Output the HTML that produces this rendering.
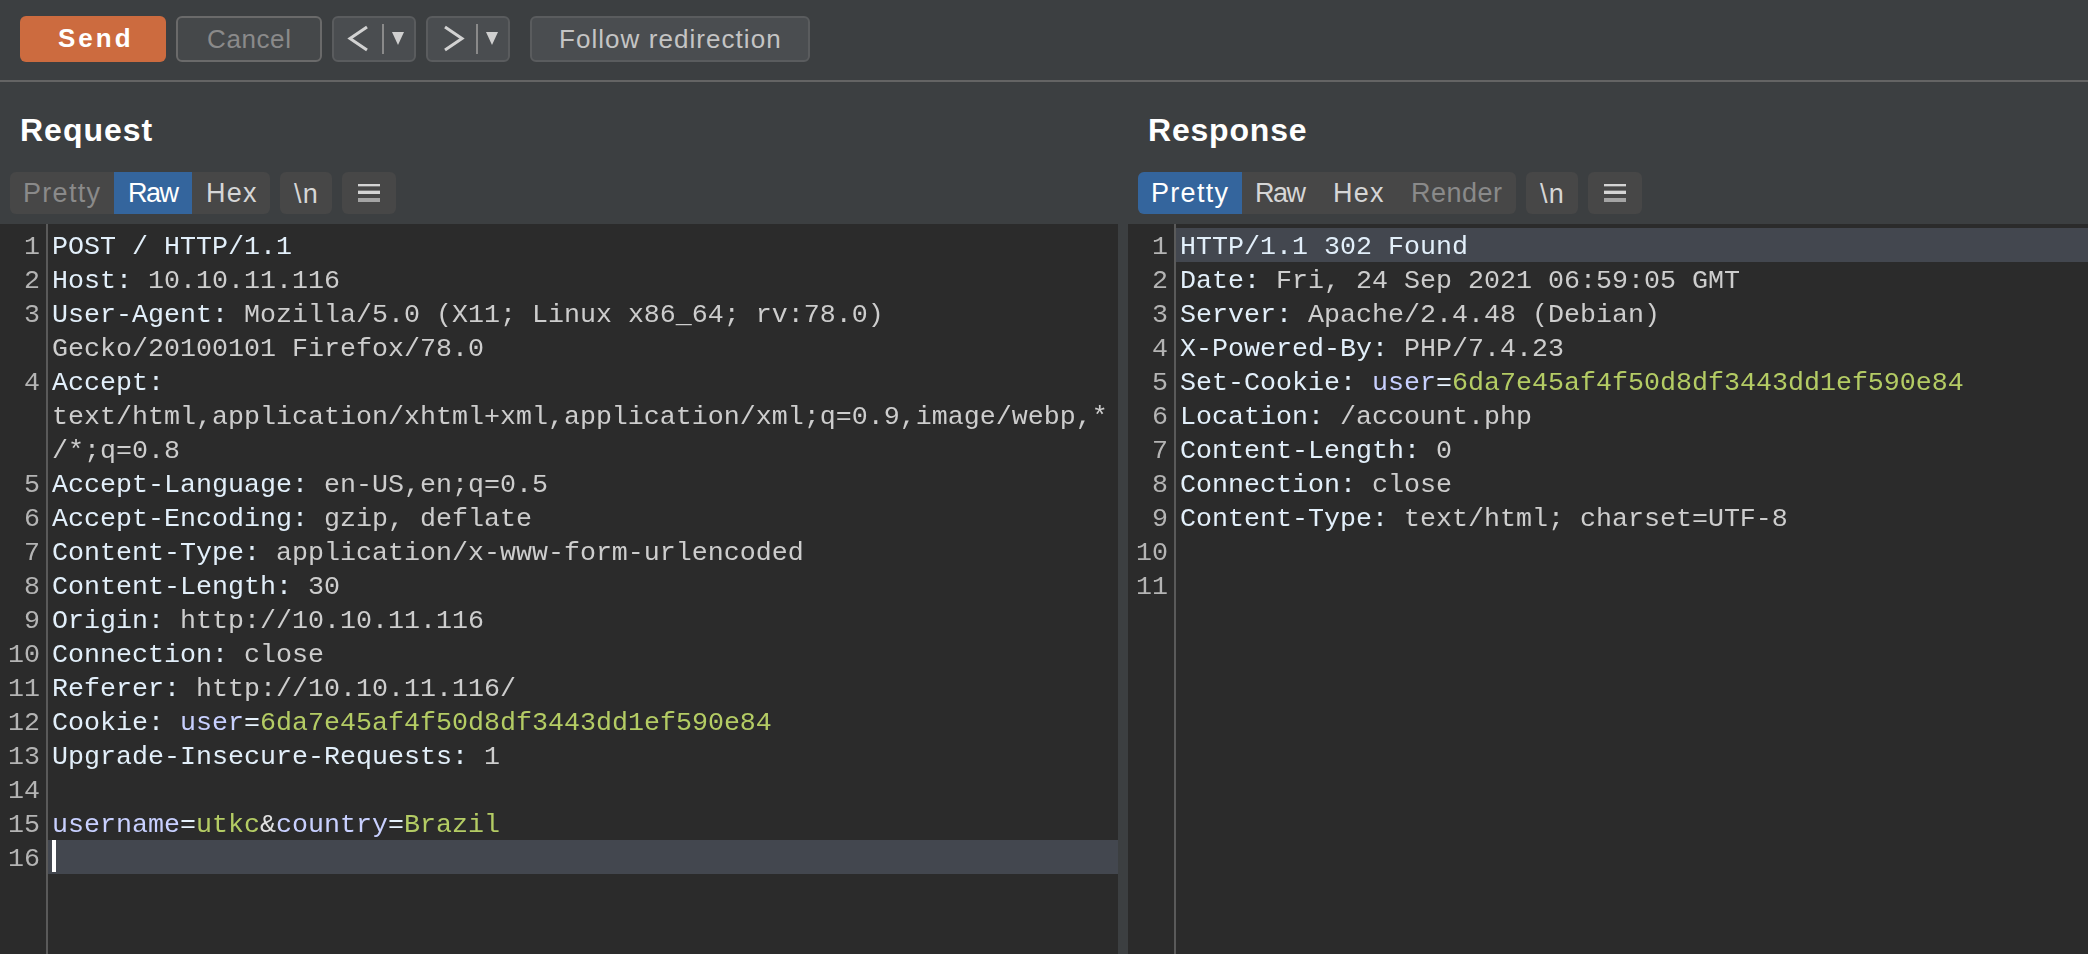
<!DOCTYPE html>
<html><head><meta charset="utf-8">
<style>
html,body{margin:0;padding:0;}
body{width:2088px;height:954px;overflow:hidden;background:#3c3f41;position:relative;font-family:"Liberation Sans",sans-serif;}
.abs{position:absolute;}
.btn{position:absolute;box-sizing:border-box;border-radius:6px;}
#send{left:20px;top:16px;width:146px;height:46px;background:#cc6b3f;}
#cancel{left:176px;top:16px;width:146px;height:46px;background:#45484a;border:2px solid #6a6a6a;}
#prev{left:332px;top:16px;width:84px;height:46px;background:#4a4d50;border:2px solid #5a5c5e;}
#next{left:426px;top:16px;width:84px;height:46px;background:#4a4d50;border:2px solid #5a5c5e;}
#follow{left:530px;top:16px;width:280px;height:46px;background:#4a4d50;border:2px solid #5a5c5e;}
.lbl{position:absolute;white-space:pre;line-height:1;}
#sep{left:0;top:80px;width:2088px;height:2px;background:#646464;}
.title{position:absolute;font-weight:bold;font-size:32px;color:#ffffff;letter-spacing:0.8px;line-height:1;white-space:pre;}
.tabgrp{position:absolute;top:172px;height:42px;background:#474747;border-radius:6px;overflow:hidden;}
.tab{position:absolute;top:0;height:42px;}
.tab.sel{background:#34659d;}
.tabt{position:absolute;font-size:27px;line-height:1;white-space:pre;letter-spacing:1.3px;}
.editor{position:absolute;top:224px;height:730px;background:#2b2b2b;overflow:hidden;}
.gut{position:absolute;top:0;width:2px;height:730px;background:#5a5a5a;}
.hl{position:absolute;height:34px;background:#43474f;}
.code{position:absolute;will-change:transform;font-family:"Liberation Mono",monospace;font-size:26.667px;line-height:34px;white-space:pre;color:#cdcdcd;}
.ln{position:absolute;will-change:transform;font-family:"Liberation Mono",monospace;font-size:26.667px;line-height:34px;white-space:pre;color:#b4b4b4;text-align:right;}
.h{color:#e2effa;}
.k{color:#c8d0ff;}
.v{color:#b4cc64;}
.e{color:#e6f2fc;}
.a{color:#e0e0e0;}
</style></head>
<body>
<!-- toolbar -->
<div class="btn" id="send"><div class="lbl" style="left:38px;top:9px;font-size:26px;font-weight:bold;color:#fff;letter-spacing:3px;">Send</div></div>
<div class="btn" id="cancel"><div class="lbl" style="left:29px;top:8px;font-size:26px;color:#8a8a8a;letter-spacing:0.6px;">Cancel</div></div>
<div class="btn" id="prev">
<svg class="abs" style="left:-2px;top:-2px" width="84" height="46" viewBox="0 0 84 46">
<polyline points="35,11 18,22.5 35,34" fill="none" stroke="#d2d2d2" stroke-width="3"/>
<rect x="50" y="8" width="2" height="30" fill="#8a8a8a"/>
<polygon points="60,16 72,16 66,29" fill="#cfcfcf"/>
</svg></div>
<div class="btn" id="next">
<svg class="abs" style="left:-2px;top:-2px" width="84" height="46" viewBox="0 0 84 46">
<polyline points="19,11 36,22.5 19,34" fill="none" stroke="#d2d2d2" stroke-width="3"/>
<rect x="50" y="8" width="2" height="30" fill="#8a8a8a"/>
<polygon points="60,16 72,16 66,29" fill="#cfcfcf"/>
</svg></div>
<div class="btn" id="follow"><div class="lbl" style="left:27px;top:8px;font-size:26px;color:#c4c4c4;letter-spacing:1.05px;">Follow redirection</div></div>
<div class="abs" id="sep"></div>

<!-- titles -->
<div class="title" style="left:20px;top:114px;letter-spacing:1px;">Request</div>
<div class="title" style="left:1148px;top:114px;">Response</div>

<!-- request tabs -->
<div class="tabgrp" style="left:10px;width:260px;">
  <div class="tab sel" style="left:104px;width:78px;"></div>
  <div class="tabt" style="left:13px;top:8px;color:#8a8a8a;">Pretty</div>
  <div class="tabt" style="left:118px;top:8px;color:#ffffff;letter-spacing:-1.5px;">Raw</div>
  <div class="tabt" style="left:196px;top:8px;color:#d6d6d6;">Hex</div>
</div>
<div class="tabgrp" style="left:280px;width:52px;"><div class="tabt" style="left:14px;top:9px;color:#d6d6d6;">\n</div></div>
<div class="tabgrp" style="left:342px;width:54px;">
<svg class="abs" style="left:0;top:0" width="54" height="42"><rect x="16" y="12" width="22" height="2" fill="#d4d4d4"/><rect x="16" y="14" width="22" height="1" fill="#777"/><rect x="16" y="18" width="22" height="1" fill="#777"/><rect x="16" y="19" width="22" height="3" fill="#d4d4d4"/><rect x="16" y="26" width="22" height="4" fill="#a4a4a4"/></svg>
</div>

<!-- response tabs -->
<div class="tabgrp" style="left:1138px;width:378px;">
  <div class="tab sel" style="left:0px;width:104px;"></div>
  <div class="tabt" style="left:13px;top:8px;color:#ffffff;">Pretty</div>
  <div class="tabt" style="left:117px;top:8px;color:#d6d6d6;letter-spacing:-1.5px;">Raw</div>
  <div class="tabt" style="left:195px;top:8px;color:#d6d6d6;">Hex</div>
  <div class="tabt" style="left:273px;top:8px;color:#8a8a8a;letter-spacing:0.5px;">Render</div>
</div>
<div class="tabgrp" style="left:1526px;width:52px;"><div class="tabt" style="left:14px;top:9px;color:#d6d6d6;">\n</div></div>
<div class="tabgrp" style="left:1588px;width:54px;">
<svg class="abs" style="left:0;top:0" width="54" height="42"><rect x="16" y="12" width="22" height="2" fill="#d4d4d4"/><rect x="16" y="14" width="22" height="1" fill="#777"/><rect x="16" y="18" width="22" height="1" fill="#777"/><rect x="16" y="19" width="22" height="3" fill="#d4d4d4"/><rect x="16" y="26" width="22" height="4" fill="#a4a4a4"/></svg>
</div>

<!-- request editor -->
<div class="editor" style="left:0;width:1118px;">
  <div class="gut" style="left:46px;"></div>
  <div class="hl" style="left:48px;top:616px;width:1070px;"></div>
  <div class="abs" style="left:52px;top:616px;width:4px;height:32px;background:#ffffff;"></div>
  <div class="ln" style="left:0;top:6px;width:40px;">1
2
3

4


5
6
7
8
9
10
11
12
13
14
15
16</div>
  <div class="code" style="left:52px;top:6px;"><span class="h">POST / HTTP/1.1</span>
<span class="h">Host:</span> 10.10.11.116
<span class="h">User-Agent:</span> Mozilla/5.0 (X11; Linux x86_64; rv:78.0)
Gecko/20100101 Firefox/78.0
<span class="h">Accept:</span>
text/html,application/xhtml+xml,application/xml;q=0.9,image/webp,*
/*;q=0.8
<span class="h">Accept-Language:</span> en-US,en;q=0.5
<span class="h">Accept-Encoding:</span> gzip, deflate
<span class="h">Content-Type:</span> application/x-www-form-urlencoded
<span class="h">Content-Length:</span> 30
<span class="h">Origin:</span> http://10.10.11.116
<span class="h">Connection:</span> close
<span class="h">Referer:</span> http://10.10.11.116/
<span class="h">Cookie:</span> <span class="k">user</span><span class="e">=</span><span class="v">6da7e45af4f50d8df3443dd1ef590e84</span>
<span class="h">Upgrade-Insecure-Requests:</span> 1

<span class="k">username</span><span class="e">=</span><span class="v">utkc</span><span class="a">&amp;</span><span class="k">country</span><span class="e">=</span><span class="v">Brazil</span>
</div>
</div>

<!-- response editor -->
<div class="editor" style="left:1128px;width:960px;">
  <div class="gut" style="left:46px;"></div>
  <div class="hl" style="left:48px;top:4px;width:912px;"></div>
  <div class="ln" style="left:0;top:6px;width:40px;">1
2
3
4
5
6
7
8
9
10
11</div>
  <div class="code" style="left:52px;top:6px;"><span class="h">HTTP/1.1 302 Found</span>
<span class="h">Date:</span> Fri, 24 Sep 2021 06:59:05 GMT
<span class="h">Server:</span> Apache/2.4.48 (Debian)
<span class="h">X-Powered-By:</span> PHP/7.4.23
<span class="h">Set-Cookie:</span> <span class="k">user</span><span class="e">=</span><span class="v">6da7e45af4f50d8df3443dd1ef590e84</span>
<span class="h">Location:</span> /account.php
<span class="h">Content-Length:</span> 0
<span class="h">Connection:</span> close
<span class="h">Content-Type:</span> text/html; charset=UTF-8

</div>
</div>

</body></html>
